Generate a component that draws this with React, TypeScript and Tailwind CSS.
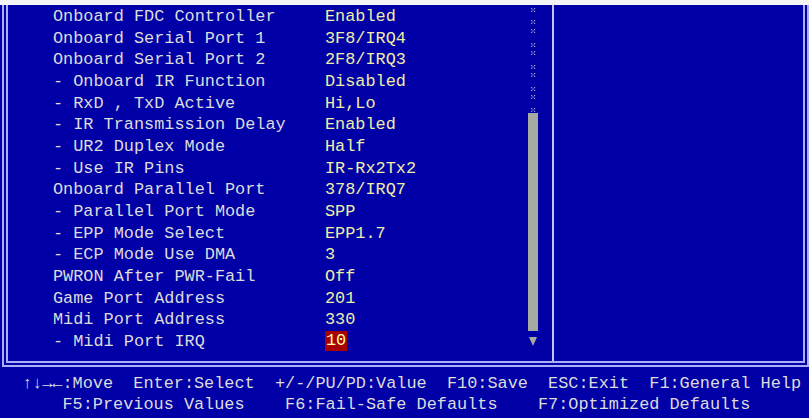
import React from 'react';

interface SetupRow {
  label: string;
  value: string;
  active?: boolean;
}

const rows: SetupRow[] = [
  { label: 'Onboard FDC Controller', value: 'Enabled' },
  { label: 'Onboard Serial Port 1', value: '3F8/IRQ4' },
  { label: 'Onboard Serial Port 2', value: '2F8/IRQ3' },
  { label: '- Onboard IR Function', value: 'Disabled' },
  { label: '- RxD , TxD Active', value: 'Hi,Lo' },
  { label: '- IR Transmission Delay', value: 'Enabled' },
  { label: '- UR2 Duplex Mode', value: 'Half' },
  { label: '- Use IR Pins', value: 'IR-Rx2Tx2' },
  { label: 'Onboard Parallel Port', value: '378/IRQ7' },
  { label: '- Parallel Port Mode', value: 'SPP' },
  { label: '- EPP Mode Select', value: 'EPP1.7' },
  { label: '- ECP Mode Use DMA', value: '3' },
  { label: 'PWRON After PWR-Fail', value: 'Off' },
  { label: 'Game Port Address', value: '201' },
  { label: 'Midi Port Address', value: '330' },
  { label: '- Midi Port IRQ', value: '10', active: true },
];

// shade marks of the scroll track, y offsets from top of the column
const trackMarks = [5, 17, 26, 40, 48, 62, 70, 84, 92, 105];

const ScrollTrack: React.FC = () => (
  <div className="w-[10px] flex flex-col items-center">
    <svg width="10" height="108" viewBox="0 0 10 108">
      {trackMarks.map((y) => (
        <g key={y} fill="#9c9cd4">
          <rect x="3" y={y - 2} width="1.2" height="1.2" />
          <rect x="6" y={y - 2} width="1.2" height="1.2" />
          <rect x="4.5" y={y - 0.6} width="1.2" height="1.2" />
          <rect x="3" y={y + 0.8} width="1.2" height="1.2" />
          <rect x="6" y={y + 0.8} width="1.2" height="1.2" />
        </g>
      ))}
    </svg>
    <div className="w-[10px] h-[218px] bg-[#a6aaa0]" />
    <svg width="10" height="10" viewBox="0 0 10 10" className="mt-[6px]">
      <polygon points="1,0 9,0 5,9" fill="#a6aaa0" />
    </svg>
  </div>
);

export default function App() {
  return (
    <div className="w-[809px] h-[418px] overflow-hidden bg-[#0000a6] font-['Liberation_Mono','DejaVu_Sans_Mono',monospace] text-[16.87px] text-[#dcdcdc]">
      <div className="h-[5px] bg-[#f4f4f4]" />
      <div className="ml-[2px] h-[362px] flex border-[6px] border-t-0 border-double border-[#acacf8]">
        <div className="w-[546px] flex border-r-2 border-[#c4c4fc]">
          <div className="w-[520px] pl-[45px] pt-[1px]">
            {rows.map((row) => (
              <div key={row.label} className="h-[21.67px] leading-[21.67px] flex whitespace-pre">
                <span className="w-[272px]">{row.label}</span>
                {row.active ? (
                  <span className="h-[20px] leading-[20px] mt-[0.5px] px-px bg-[#a80000] text-[#ffffa8]">{row.value}</span>
                ) : (
                  <span className="text-[#eeeea6]">{row.value}</span>
                )}
              </div>
            ))}
          </div>
          <ScrollTrack />
        </div>
        <div className="flex-1" />
      </div>
      <div className="pt-[7px] pl-[22px] leading-[20.5px] whitespace-pre">
        <div>{'↑↓→←:Move  Enter:Select  +/-/PU/PD:Value  F10:Save  ESC:Exit  F1:General Help'}</div>
        <div>{'    F5:Previous Values    F6:Fail-Safe Defaults    F7:Optimized Defaults'}</div>
      </div>
    </div>
  );
}
